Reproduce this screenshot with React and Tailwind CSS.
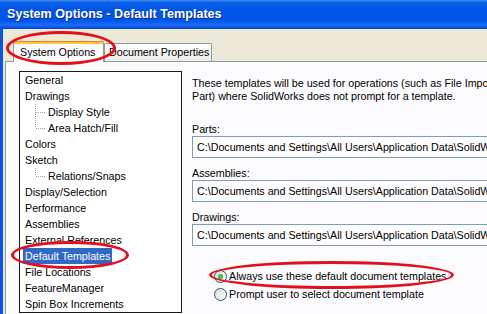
import React from "react";

const treeItems = [
  { label: "General" },
  { label: "Drawings" },
  { label: "Display Style", child: "mid" },
  { label: "Area Hatch/Fill", child: "last" },
  { label: "Colors" },
  { label: "Sketch" },
  { label: "Relations/Snaps", child: "last" },
  { label: "Display/Selection" },
  { label: "Performance" },
  { label: "Assemblies" },
  { label: "External References" },
  { label: "Default Templates", selected: true },
  { label: "File Locations" },
  { label: "FeatureManager" },
  { label: "Spin Box Increments" },
];

const paths = [
  { label: "Parts:" },
  { label: "Assemblies:" },
  { label: "Drawings:" },
];

const PATH_TEXT =
  "C:\\Documents and Settings\\All Users\\Application Data\\SolidWorks\\SolidWorks 2008\\templates";

/* tree connector dots */
const Connector = ({ type }) => (
  <svg width="11" height="16" className="shrink-0 ml-[12px]">
    <line
      x1="0.5"
      y1="0"
      x2="0.5"
      y2={type === "last" ? 8 : 16}
      stroke="#a0a0a0"
      strokeDasharray="1 1"
    />
    <line x1="1" y1="8.5" x2="10" y2="8.5" stroke="#a0a0a0" strokeDasharray="1 1" />
  </svg>
);

const Radio = ({ checked }) => (
  <span className="w-[13px] h-[13px] rounded-full border border-[#1c5180] bg-[linear-gradient(135deg,#dcdcd6,#ffffff)] flex items-center justify-center shrink-0">
    {checked && (
      <span className="w-[5px] h-[5px] rounded-full bg-[radial-gradient(circle,#55d751,#21a121)]" />
    )}
  </span>
);

const App = () => {
  return (
    <div className="relative w-[487px] h-[314px] overflow-hidden bg-[#ece9d8] font-['Liberation_Sans',Arial,sans-serif] text-[10.7px] text-black flex flex-col">
      {/* ================= TITLE BAR ================= */}
      <div className="h-[29px] shrink-0 flex items-center pl-[7px] bg-[linear-gradient(to_bottom,#3d8ff7_0%,#0a5fe8_9%,#0055e5_35%,#0056e8_72%,#1b6dfb_86%,#0045d0_100%)]">
        <span className="text-white font-bold text-[12.6px] [text-shadow:1px_1px_0_#0b2a8a]">
          System Options - Default Templates
        </span>
      </div>

      <div className="flex-1 flex min-h-0">
        {/* window frame */}
        <div className="w-[3px] shrink-0 bg-[#0a55df]" />

        <div className="flex-1 flex flex-col min-w-0">
          {/* ================= TABS ================= */}
          <div className="h-[32px] shrink-0 flex items-end pl-[10px] relative z-10 whitespace-nowrap">
            <div className="h-[21px] w-[91px] -mb-px bg-[#fcfcfe] border-x border-[#919b9c] rounded-t-[2px] flex flex-col">
              <div className="h-[1px] bg-[#e68b2c]" />
              <div className="h-[2px] bg-[#ffc73c]" />
              <div className="flex-1 flex items-center pl-[6px] pb-[2px]">System Options</div>
            </div>
            <div className="h-[18px] w-[108px] shrink-0 border border-b-0 border-[#919b9c] rounded-t-[2px] bg-[linear-gradient(to_bottom,#ffffff,#ecebe6)] flex items-center pl-[4px]">
              Document Properties
            </div>
          </div>

          {/* ================= PANEL ================= */}
          <div className="flex-1 min-h-0 bg-[#fcfcfe] border-t border-l border-[#919b9c] flex ml-[2px]">
            {/* TREE */}
            <div className="w-[163px] shrink-0 ml-[13px] mt-[9px] border border-[#1a1a1a] bg-white pl-[3px] self-start">
              {treeItems.map((item) => (
                <div key={item.label} className="h-[16px] flex items-center whitespace-nowrap">
                  {item.child && <Connector type={item.child} />}
                  <span
                    className={
                      item.selected
                        ? "h-[16px] flex items-center px-[2px] bg-[#316ac5] text-white"
                        : "px-[2px]"
                    }
                  >
                    {item.label}
                  </span>
                </div>
              ))}
            </div>

            {/* RIGHT */}
            <div className="flex-1 min-w-0 ml-[10px] mt-[15px] flex flex-col whitespace-nowrap leading-[13px]">
              <p>These templates will be used for operations (such as File Import or New</p>
              <p>Part) where SolidWorks does not prompt for a template.</p>

              <div className="mt-[20px] flex flex-col">
                {paths.map((p, i) => (
                  <div key={p.label} className={i === 0 ? "" : "mt-[9px]"}>
                    <p>{p.label}</p>
                    <div className="h-[22px] w-[340px] border border-[#7f9db9] bg-[#fdfdfe] flex items-center pl-[4px]">
                      {PATH_TEXT}
                    </div>
                  </div>
                ))}
              </div>

              <div className="mt-[21px] ml-[22px] flex flex-col">
                <div className="h-[18px] flex items-center gap-[2px]">
                  <Radio checked />
                  <span>Always use these default document templates</span>
                </div>
                <div className="h-[18px] flex items-center gap-[2px]">
                  <Radio />
                  <span>Prompt user to select document template</span>
                </div>
              </div>
            </div>
          </div>
        </div>
      </div>

      {/* ================= RED CALLOUTS ================= */}
      <div className="absolute left-[6px] top-[31px] w-[110px] h-[34px] rounded-[50%] border-[3px] border-[#e3101c] pointer-events-none z-20" />
      <div className="absolute left-[11px] top-[241px] w-[118px] h-[28px] rounded-[50%] border-[3px] border-[#e3101c] pointer-events-none z-20" />
      <div className="absolute left-[209px] top-[261px] w-[245px] h-[28px] rounded-[50%] border-[3px] border-[#e3101c] pointer-events-none z-20" />
    </div>
  );
};

export default App;
